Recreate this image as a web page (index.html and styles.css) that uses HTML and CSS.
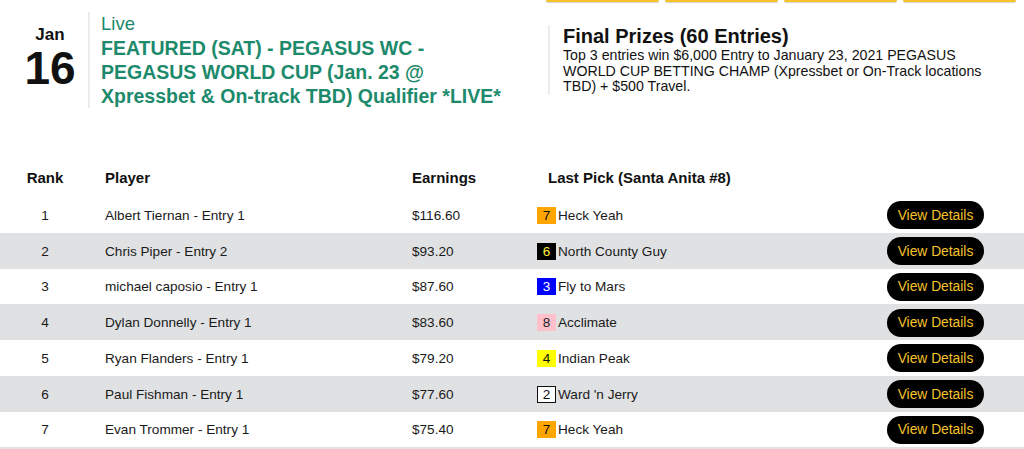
FILE: index.html
```html
<!DOCTYPE html>
<html>
<head>
<meta charset="utf-8">
<link rel="stylesheet" href="styles.css">
</head>
<body>
<div class="tabs">
  <span class="tab"></span><span class="tab"></span><span class="tab"></span><span class="tab"></span>
</div>
<header class="contest">
  <div class="date">
    <div class="month">Jan</div>
    <div class="day">16</div>
  </div>
  <div class="info">
    <div class="status">Live</div>
    <h1 class="title">FEATURED (SAT) - PEGASUS WC - PEGASUS WORLD CUP (Jan. 23 @ Xpressbet &amp; On-track TBD) Qualifier *LIVE*</h1>
  </div>
  <div class="prizes">
    <h2 class="prizes-title">Final Prizes (60 Entries)</h2>
    <p class="prizes-text">Top 3 entries win $6,000 Entry to January 23, 2021 PEGASUS WORLD CUP BETTING CHAMP (Xpressbet or On-Track locations TBD) + $500 Travel.</p>
  </div>
</header>
<table class="board">
  <colgroup>
    <col class="c-rank"><col class="c-player"><col class="c-earn"><col class="c-pick"><col class="c-btn">
  </colgroup>
  <thead>
    <tr><th class="rank">Rank</th><th>Player</th><th>Earnings</th><th class="pick-h">Last Pick (Santa Anita #8)</th><th></th></tr>
  </thead>
  <tbody>
    <tr><td class="rank">1</td><td>Albert Tiernan - Entry 1</td><td>$116.60</td><td><span class="pp pp7">7</span><span class="horse">Heck Yeah</span></td><td class="act"><button class="details">View Details</button></td></tr>
    <tr><td class="rank">2</td><td>Chris Piper - Entry 2</td><td>$93.20</td><td><span class="pp pp6">6</span><span class="horse">North County Guy</span></td><td class="act"><button class="details">View Details</button></td></tr>
    <tr><td class="rank">3</td><td>michael caposio - Entry 1</td><td>$87.60</td><td><span class="pp pp3">3</span><span class="horse">Fly to Mars</span></td><td class="act"><button class="details">View Details</button></td></tr>
    <tr><td class="rank">4</td><td>Dylan Donnelly - Entry 1</td><td>$83.60</td><td><span class="pp pp8">8</span><span class="horse">Acclimate</span></td><td class="act"><button class="details">View Details</button></td></tr>
    <tr><td class="rank">5</td><td>Ryan Flanders - Entry 1</td><td>$79.20</td><td><span class="pp pp4">4</span><span class="horse">Indian Peak</span></td><td class="act"><button class="details">View Details</button></td></tr>
    <tr><td class="rank">6</td><td>Paul Fishman - Entry 1</td><td>$77.60</td><td><span class="pp pp2">2</span><span class="horse">Ward 'n Jerry</span></td><td class="act"><button class="details">View Details</button></td></tr>
    <tr><td class="rank">7</td><td>Evan Trommer - Entry 1</td><td>$75.40</td><td><span class="pp pp7">7</span><span class="horse">Heck Yeah</span></td><td class="act"><button class="details">View Details</button></td></tr>
  </tbody>
</table>
<div class="next-row"></div>
</body>
</html>
```
FILE: styles.css
```css
html, body {
  margin: 0;
  padding: 0;
  overflow: hidden;
  background: #fff;
}
body {
  font-family: "Liberation Sans", Arial, sans-serif;
  color: #1a1a1a;
}
.tabs {
  display: flex;
  justify-content: flex-end;
  gap: 6px;
  padding-right: 8px;
  height: 3px;
}
.tab {
  width: 113px;
  height: 2px;
  background: #f6c226;
  border-radius: 0 0 3px 3px;
  box-shadow: 0 1px 1px rgba(0, 0, 0, 0.18);
}
.contest {
  display: flex;
  align-items: center;
  margin-top: 9px;
}
.date {
  width: 76px;
  padding-left: 12px;
  margin-bottom: 6px;
  text-align: center;
  font-weight: bold;
  color: #111;
}
.month {
  font-size: 17px;
  line-height: 21px;
}
.day {
  font-size: 46px;
  line-height: 46px;
}
.info {
  border-left: 2px solid #ececec;
  padding-left: 11px;
  width: 415px;
  margin-right: 32px;
  color: #1d8a6c;
}
.status {
  font-size: 18.5px;
  line-height: 24px;
}
.title {
  margin: 0;
  font-size: 19.5px;
  line-height: 24px;
  font-weight: bold;
}
.prizes {
  border-left: 2px solid #ececec;
  padding-left: 13px;
  width: 435px;
  color: #111;
}
.prizes-title {
  margin: 0;
  font-size: 20px;
  line-height: 23px;
  font-weight: bold;
}
.prizes-text {
  margin: 0;
  font-size: 14.2px;
  line-height: 15.5px;
}
.board {
  margin-top: 49px;
  width: 100%;
  border-collapse: collapse;
  table-layout: fixed;
}
.c-rank { width: 90px; }
.c-player { width: 307px; }
.c-earn { width: 125px; }
.c-btn { width: 150px; }
.board th {
  height: 40px;
  padding: 0 0 0 15px;
  font-size: 15px;
  font-weight: bold;
  text-align: left;
  color: #111;
  vertical-align: middle;
}
.board th.rank, .board td.rank {
  padding-left: 0;
  text-align: center;
}
.board th.pick-h {
  padding-left: 26px;
}
.board td {
  height: 34.75px;
  padding: 1px 0 0 15px;
  font-size: 13.6px;
  vertical-align: middle;
  color: #1a1a1a;
}
.board tbody tr:nth-child(even) td,
.next-row {
  background: #e0e1e3;
}
.next-row {
  height: 10px;
}
.pp {
  display: inline-block;
  box-sizing: border-box;
  width: 19px;
  height: 17px;
  line-height: 17px;
  text-align: center;
  vertical-align: middle;
  font-size: 13.6px;
}
.horse {
  margin-left: 2px;
  vertical-align: middle;
}
.pp7 { background: #ffa500; color: #111; }
.pp6 { background: #000; color: #ffeb3b; }
.pp3 { background: #0000ff; color: #fff; }
.pp8 { background: #ffc0cb; color: #222; }
.pp4 { background: #ffff00; color: #111; }
.pp2 { background: #fff; color: #111; border: 1px solid #111; line-height: 15px; }
.board td.act {
  padding: 1px 40px 0 0;
  text-align: right;
}
.details {
  width: 97px;
  height: 28px;
  border: none;
  border-radius: 14px;
  background: #000;
  color: #f4c22b;
  font-family: "Liberation Sans", Arial, sans-serif;
  font-size: 13.8px;
  padding: 0;
  vertical-align: middle;
  cursor: pointer;
}
```
